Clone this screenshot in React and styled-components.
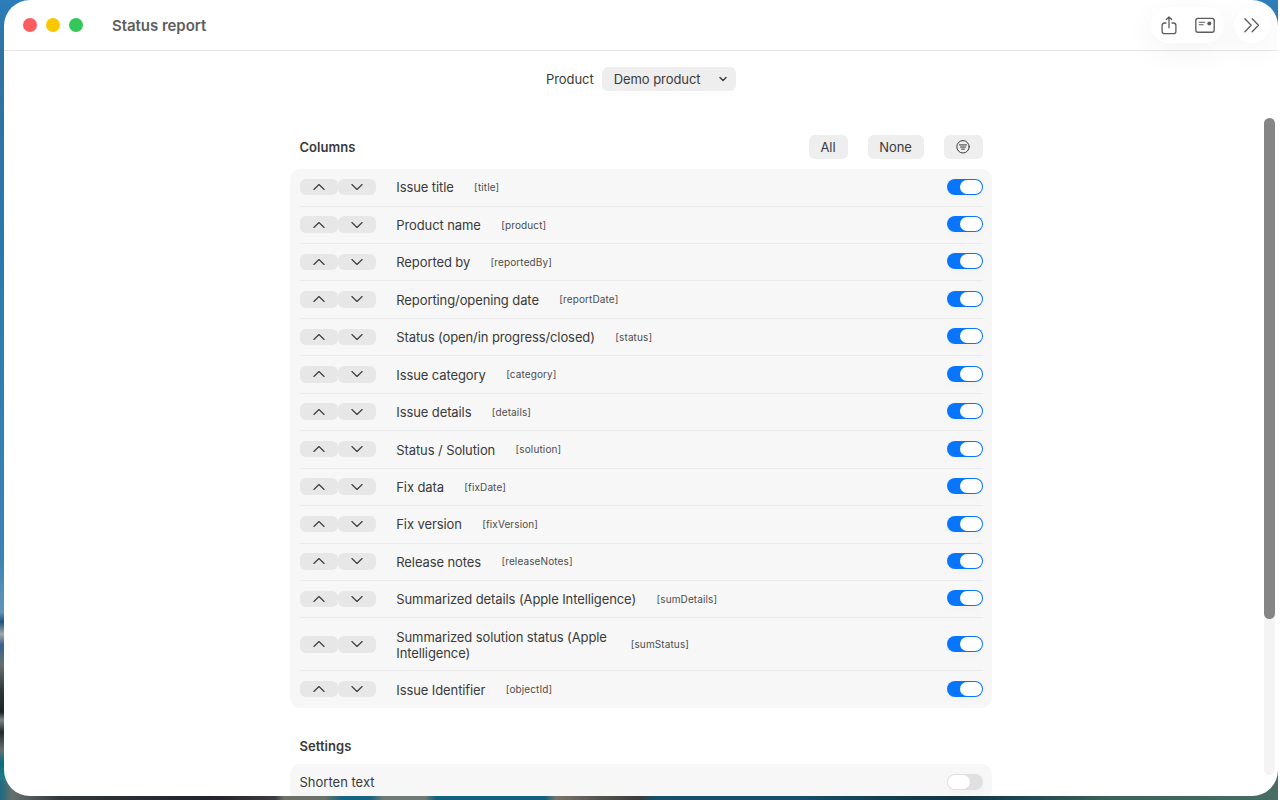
import React from "react";
import styled, { createGlobalStyle, css } from "styled-components";

const Global = createGlobalStyle`
  * { box-sizing: border-box; }
  body { margin: 0; overflow: hidden; background: #fff; }
`;

const Desktop = styled.div`
  width: 1278px;
  height: 800px;
  padding-left: 4px;
  overflow: hidden;
  font-family: Inter, "Liberation Sans", sans-serif;
  font-size: 13px;
  color: #3a3a3a;
  background:
    linear-gradient(90deg, #1c6a83 0, #65706e 12px, #33363b 60px, #22232b 210px, #3b3d3f 275px, #6b7068 284px, #6b7068 325px, #156482 342px, #156482 370px, #707a75 384px, #707a75 425px, #14617f 436px, #14617f 545px, #77756b 556px, #55534f 600px, #3a3c3b 640px, #174f6c 655px, #174f6c 800px, #123f4e 880px, #123642 960px, #1d4350 1010px, #3b6259 1110px, #476d64 1280px) 0 780px / 1280px 20px no-repeat,
    linear-gradient(180deg, #2c7dba 0, #31719f 60px, #2b78b0 250px, #3c83b4 560px, #6296b8 612px, #1f5480 622px, #a3a9a8 634px, #386090 645px, #66706f 665px, #30383b 690px, #1a2226 712px, #7d8586 720px, #222b2e 732px, #66706f 750px, #0c6c7d 762px, #207d88 780px);
`;

const Window = styled.div`
  height: 796px;
  display: flex;
  flex-direction: column;
  overflow: hidden;
  background: #fff;
  border-radius: 26px;
`;

const TitleBar = styled.header`
  flex: none;
  height: 51px;
  display: flex;
  align-items: center;
  padding: 0 8px 0 19px;
  border-bottom: 1px solid #e6e6e6;
`;

const Lights = styled.div`
  display: flex;
  gap: 9px;
`;

const Light = styled.span`
  width: 14px;
  height: 14px;
  border-radius: 50%;
  background: ${(p) => p.$color};
`;

const Title = styled.h1`
  flex: 1;
  margin: 0 0 0 29px;
  font-size: 15px;
  font-weight: 600;
  letter-spacing: -0.04px;
  color: #5e5e5e;
`;

const ToolGroup = styled.div`
  height: 36px;
  width: ${(p) => p.$width}px;
  display: flex;
  align-items: center;
  justify-content: center;
  gap: 17px;
  margin-left: 10px;
  border-radius: 18px;
  background: #fff;
  color: #5c5c5c;
  box-shadow: 0 8px 32px rgba(0, 0, 0, 0.055);
`;

const Body = styled.div`
  flex: 1;
  min-height: 0;
  display: flex;
`;

const Content = styled.main`
  flex: 1;
  min-width: 0;
  padding-left: 286px;
`;

const ProductRow = styled.div`
  display: flex;
  align-items: center;
  gap: 8px;
  height: 24px;
  margin: 16px 0 44px 256px;
  letter-spacing: -0.06px;
`;

const Button = styled.button`
  display: flex;
  align-items: center;
  justify-content: center;
  height: 24px;
  width: ${(p) => p.$width}px;
  padding: 0;
  border: 0;
  border-radius: 6px;
  background: #eeeeee;
  color: #3a3a3a;
  font: inherit;
  letter-spacing: -0.06px;
`;

const Select = styled(Button)`
  justify-content: space-between;
  padding: 0 9px 0 12px;
`;

const SectionHead = styled.div`
  width: 702px;
  height: 24px;
  display: flex;
  align-items: center;
  gap: 20px;
  padding: 0 9.5px;
`;

const Heading = styled.h2`
  flex: 1;
  margin: 0;
  font-size: 13px;
  font-weight: 600;
  letter-spacing: 0.04px;
`;

const Card = styled.section`
  width: 702px;
  margin: ${(p) => p.$top}px 0 ${(p) => p.$bottom || 0}px;
  padding: 0 9.5px;
  border-radius: 10px;
  background: #f7f7f7;
`;

const Row = styled.div`
  display: flex;
  align-items: center;
  height: ${(p) => (p.$tall ? 52.8 : 37.45)}px;
  padding-bottom: ${(p) => (p.$tall ? 0 : 0.6)}px;
  &:first-child { height: 36.6px; }
  & + & { border-top: 1px solid #ebebeb; }
`;

const ArrowButton = styled.button`
  width: 38.4px;
  height: 16.5px;
  display: flex;
  align-items: center;
  justify-content: center;
  padding: 0;
  border: 0;
  border-radius: 6px;
  background: #e7e7e7;
  color: #3a3a3a;
`;

const Name = styled.span`
  margin: 0.8px 0 0 20px;
  max-width: 214px;
  line-height: 16px;
  letter-spacing: -0.1px;
  ${(p) => !p.$tall && css`white-space: nowrap; max-width: none;`}
`;

const Key = styled.span`
  margin-left: 20.4px;
  font-size: 10px;
  letter-spacing: 0.12px;
  color: #4c4c4c;
`;

const Spacer = styled.span`
  flex: 1;
`;

const Toggle = styled.span`
  width: 36px;
  height: 16px;
  display: flex;
  justify-content: ${(p) => (p.$on ? "flex-end" : "flex-start")};
  padding: 1px;
  margin-top: -1px;
  border-radius: 8px;
  background: ${(p) => (p.$on ? "#0876fc" : "#e0e0e0")};
  box-shadow: 0 3px 10px rgba(0, 0, 0, 0.025);
  &::after {
    content: "";
    width: 22px;
    border-radius: 7px;
    background: #fff;
  }
`;

const Track = styled.div`
  width: 11px;
  height: 657px;
  margin: 67px 3px 0 0;
  border-radius: 6px;
  background: #f4f4f4;
`;

const Thumb = styled.div`
  height: 501px;
  border-radius: 6px;
  background: #858585;
`;

const Icon = styled.svg`
  display: block;
  fill: none;
  stroke: currentColor;
  stroke-width: ${(p) => p.$weight || 1.1};
  stroke-linecap: round;
  stroke-linejoin: round;
`;

const ShareIcon = () => (
  <Icon width="18" height="20" viewBox="0 0 18 20" $weight={1.3}>
    <path d="M6 8H4.6Q2.1 8 2.1 10.4v5.8q0 2.5 2.5 2.5h8.8q2.5 0 2.5-2.5v-5.8Q15.9 8 13.4 8H12M9 12.7V2M6.4 4.5 9 1.9l2.6 2.6" />
  </Icon>
);

const CardIcon = () => (
  <Icon width="20" height="16" viewBox="0 0 20 16" $weight={1.35}>
    <rect x="0.8" y="1.4" width="18.4" height="13.8" rx="2.2" />
    <path d="M4.2 5.2H9.6M4.2 7.7H8.2" strokeWidth="1.1" />
    <circle cx="14.3" cy="6.4" r="2" fill="currentColor" stroke="none" />
  </Icon>
);

const MoreIcon = () => (
  <Icon width="18" height="16" viewBox="0 0 18 16" $weight={1.3}>
    <path d="M1.9 1.8 8.2 8.3 1.9 14.8M9.2 1.8l6.3 6.5-6.3 6.5" />
  </Icon>
);

const FilterIcon = () => (
  <Icon width="14" height="14" viewBox="0 0 14 14" $weight={1}>
    <circle cx="7" cy="6.8" r="6.2" />
    <path d="M3.4 4.9h7.2M4.5 7h5M5.6 9.1h2.8" />
  </Icon>
);

const Chevron = ({ up }) => (
  <Icon width="12" height="8" viewBox="0 0 12 8">
    <path d={up ? "M.9 6.5 6 1.5l5.1 5" : "M.9 1.5 6 6.5l5.1-5"} />
  </Icon>
);

const columns = [
  ["Issue title", "title"],
  ["Product name", "product"],
  ["Reported by", "reportedBy"],
  ["Reporting/opening date", "reportDate"],
  ["Status (open/in progress/closed)", "status"],
  ["Issue category", "category"],
  ["Issue details", "details"],
  ["Status / Solution", "solution"],
  ["Fix data", "fixDate"],
  ["Fix version", "fixVersion"],
  ["Release notes", "releaseNotes"],
  ["Summarized details (Apple Intelligence)", "sumDetails"],
  ["Summarized solution status (Apple Intelligence)", "sumStatus", true],
  ["Issue Identifier", "objectId"],
];

export default function App() {
  return (
    <Desktop>
      <Global />
      <Window>
        <TitleBar>
          <Lights>
            <Light $color="#ff5c60" />
            <Light $color="#fac800" />
            <Light $color="#34c759" />
          </Lights>
          <Title>Status report</Title>
          <ToolGroup $width={73}>
            <ShareIcon />
            <CardIcon />
          </ToolGroup>
          <ToolGroup $width={36}>
            <MoreIcon />
          </ToolGroup>
        </TitleBar>
        <Body>
          <Content>
            <ProductRow>
              <span>Product</span>
              <Select $width={134}>
                Demo product
                <Icon width="8" height="6" viewBox="0 0 8 6" $weight={1.4}>
                  <path d="M1 1.4 4 4.4l3-3" />
                </Icon>
              </Select>
            </ProductRow>
            <SectionHead>
              <Heading>Columns</Heading>
              <Button $width={39}>All</Button>
              <Button $width={56}>None</Button>
              <Button $width={39} aria-label="Filter"><FilterIcon /></Button>
            </SectionHead>
            <Card $top={10} $bottom={26.5}>
              {columns.map(([name, key, tall]) => (
                <Row key={key} $tall={tall}>
                  <ArrowButton aria-label="Move up"><Chevron up /></ArrowButton>
                  <ArrowButton aria-label="Move down"><Chevron /></ArrowButton>
                  <Name $tall={tall}>{name}</Name>
                  <Key>[{key}]</Key>
                  <Spacer />
                  <Toggle $on />
                </Row>
              ))}
            </Card>
            <SectionHead>
              <Heading>Settings</Heading>
            </SectionHead>
            <Card $top={6.2}>
              <Row>
                <span>Shorten text</span>
                <Spacer />
                <Toggle />
              </Row>
            </Card>
          </Content>
          <Track>
            <Thumb />
          </Track>
        </Body>
      </Window>
    </Desktop>
  );
}
